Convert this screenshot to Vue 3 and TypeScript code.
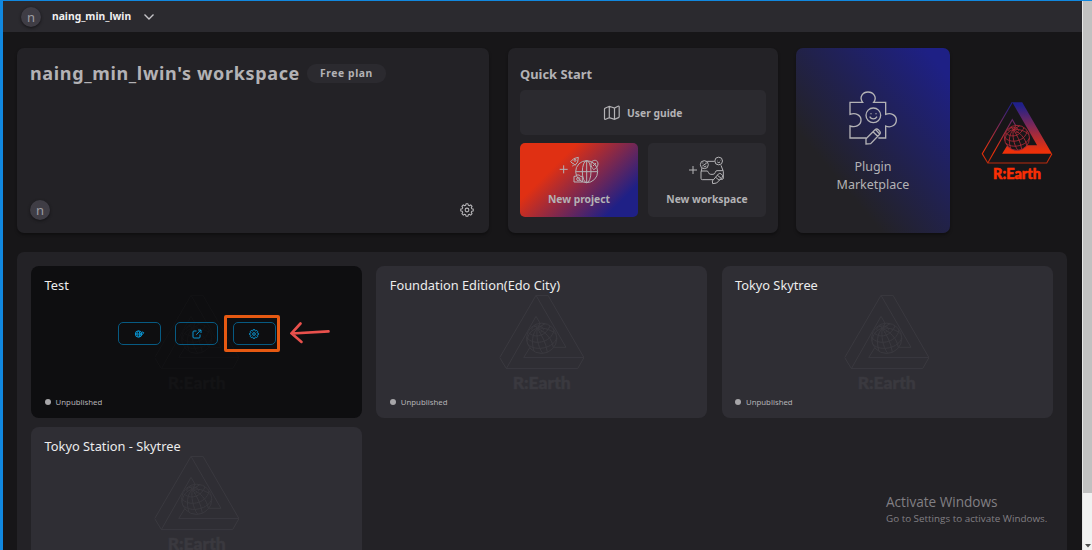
<script setup lang="ts">
interface Project {
  name: string
  status: string
  active?: boolean
}

const user = 'naing_min_lwin'
const projects: Project[] = [
  { name: 'Test', status: 'Unpublished', active: true },
  { name: 'Foundation Edition(Edo City)', status: 'Unpublished' },
  { name: 'Tokyo Skytree', status: 'Unpublished' },
  { name: 'Tokyo Station - Skytree', status: 'Unpublished' },
]

// Outline of an eight-toothed cog centred in a 24×24 box.
function cogPath(): string {
  const points: string[] = []
  for (let tooth = 0; tooth < 8; tooth++) {
    const corners: [number, number][] = [[-16, 8.4], [-9, 10.8], [9, 10.8], [16, 8.4]]
    for (const [offset, radius] of corners) {
      const angle = ((tooth * 45 + offset) * Math.PI) / 180
      points.push(`${(12 + radius * Math.cos(angle)).toFixed(2)} ${(12 + radius * Math.sin(angle)).toFixed(2)}`)
    }
  }
  return `M${points.join('L')}Z`
}
const cog = cogPath()
</script>

<template>
  <div class="window">
    <svg class="defs" width="0" height="0" aria-hidden="true">
      <defs>
        <linearGradient id="brand" gradientUnits="userSpaceOnUse" x1="0" y1="0" x2="0" y2="222">
          <stop offset="0.05" stop-color="#20208a" />
          <stop offset="0.38" stop-color="#7c2858" />
          <stop offset="0.75" stop-color="#df3013" />
          <stop offset="0.82" stop-color="#f03008" />
          <stop offset="1" stop-color="#b42a0e" />
        </linearGradient>
        <symbol id="globe" viewBox="0 0 96 96" overflow="visible">
          <circle cx="48" cy="48" r="45.5" />
          <ellipse cx="35" cy="18" rx="7" ry="4" />
          <ellipse cx="36" cy="21" rx="18" ry="10" />
          <path d="M7 27C18 48 58 47 73 11M3 45C20 71 78 63 85 23M7 66C28 90 88 76 93 46M35 18C16 22 5 38 4 58M35 18C19 33 17 62 25 86M35 18C31 40 36 72 51 93M35 18C47 36 61 62 65 89M35 18C58 28 79 48 83 76M35 18C58 14 82 26 91 36M35 18L44 3M35 18L26 8M35 18L58 4" />
        </symbol>
      </defs>
    </svg>

    <div class="page">
      <header class="header">
        <span class="avatar">n</span>
        <span class="user">{{ user }}</span>
        <svg class="chevron" viewBox="0 0 12 8"><path d="M1.500 1.500 6 6l4.500-4.500" /></svg>
      </header>

      <main class="content">
        <section class="top">
          <article class="card workspace">
            <div class="ws-head">
              <h1>{{ user }}'s workspace</h1>
              <span class="plan">Free plan</span>
            </div>
            <div class="ws-foot">
              <span class="avatar">n</span>
              <svg class="ws-gear" viewBox="0 0 24 24"><path :d="cog" /><circle cx="12" cy="12" r="3.200" /></svg>
            </div>
          </article>

          <article class="card quick">
            <h2>Quick Start</h2>
            <div class="tile guide">
              <svg class="map" viewBox="0 0 18 16">
                <path d="M2 3.200 6.300 1.300l5.200 1.700L15 1.300q1.200-.4 1.200.8v9.400q0 .8-.7 1.100l-4 1.800-5.200-1.700-3.600 1.600q-1.200.4-1.200-.8V4.200q0-.7.5-1zM6.300 1.300v11.400M11.500 3v11.400" />
              </svg>
              <span>User guide</span>
            </div>
            <div class="tiles">
              <div class="tile new-project">
                <svg class="art" viewBox="0 0 120 84">
                  <path d="M2 37h24M14 25v24" />
                  <circle cx="83" cy="44" r="33" />
                  <ellipse cx="83" cy="44" rx="13" ry="33" />
                  <path d="M83 11v66M50 44h66" />
                  <path d="M35 14l9-9 14-4-2 14-8 10-3-4-6-3zM43 24l-2 4" />
                  <circle cx="48" cy="10" r="3" />
                  <path d="M101 12c9-5 16 0 16 9 0 8-7 14-13 17-4-5-9-10-8-17 0-5 2-7 5-9zM102 17l9 9M102 27l9-9" />
                  <path d="M45 58h5l3-4h8l3 4h6v17H45z" />
                  <circle cx="58" cy="66" r="5" />
                </svg>
                <span>New project</span>
              </div>
              <div class="tile">
                <svg class="art" viewBox="0 0 120 84">
                  <path d="M6 39h24M18 27v24" />
                  <path d="M61 13h22M102 25l7 18v20q0 4-4 4h-8M45 33l-3 12v19q0 4 4 4h32M42 42h18q3 0 4 4 2 6 7 6h7q5 0 7-6 1-5 5-5h18" />
                  <circle cx="52" cy="23" r="12" />
                  <circle cx="95" cy="12" r="11.500" />
                  <path d="M46 18h3M56 18h3M46 27l12-8M50 30l8-3M91 10h1M99 10h1M91 15q5 4 8 0" />
                  <path d="M76 72l18-21q4-4 9 0 7 5 2 11L89 78l-12 2zM86 61l11 9M91 55l12 9" />
                </svg>
                <span>New workspace</span>
              </div>
            </div>
          </article>

          <article class="card market">
            <svg class="puzzle" viewBox="0 0 144 162">
              <path d="M88 141H110V105C126 112 142 102 142 87S126 64 110 70V34H74C86 18 72 3 57 3S29 18 41 34H3V70C20 64 36 72 36 87S20 111 3 105V141H52" />
              <circle cx="73" cy="73" r="22" />
              <path d="M66 67v3M81 67v3M62 77c5 9 17 9 22 0M51 143l27-27q5-4 10 0l5 6q3 4-1 8l-27 28-14 1zM72 122l14 14M79 115l13 14" />
            </svg>
            <p>Plugin<br />Marketplace</p>
          </article>

          <svg class="brand" viewBox="0 0 256 290">
            <g class="brand-lines">
              <path d="M110 1L1 188l20 33h214l19-33M21 221L110 64l17 29" />
              <path class="solid" d="M110 1h36l108 187H73l19-31h108z" />
              <use class="ball" href="#globe" x="79" y="82" width="96" height="96" />
            </g>
            <text x="40" y="281" textLength="174" lengthAdjust="spacingAndGlyphs">R:Earth</text>
          </svg>
        </section>

        <section class="panel">
          <article v-for="p in projects" :key="p.name" class="project" :class="{ active: p.active }">
            <h3>{{ p.name }}</h3>
            <svg class="mark" viewBox="0 0 256 290">
              <path d="M110 1h36l108 187-19 33H21L1 188zM21 221L110 64l17 29M110 1l90 156H91M254 188H73l19-31" />
              <use class="ball" href="#globe" x="79" y="82" width="96" height="96" />
              <text x="40" y="281" textLength="174" lengthAdjust="spacingAndGlyphs">R:Earth</text>
            </svg>
            <div v-if="p.active" class="actions">
              <button type="button">
                <svg viewBox="0 0 10 10"><circle cx="4.500" cy="5" r="3.200" /><path d="M1.300 5h6M4.500 1.800c-2 2-2 4.400 0 6.400M4.500 1.800c1.400 1.500 1.500 3 1 4.500M5 7.500l.4-1.500 3.500-3.200 1 1-3.600 3.500z" /></svg>
              </button>
              <button type="button">
                <svg viewBox="0 0 10 10"><path d="M4.500 2H2Q1 2 1 3v5q0 1 1 1h5q1 0 1-1V5.500M4.300 5.700l4.500-4.700M6 1h3v3" /></svg>
              </button>
              <button type="button">
                <svg class="small-gear" viewBox="0 0 24 24"><path :d="cog" /><circle cx="12" cy="12" r="3.200" /></svg>
              </button>
            </div>
            <div class="status"><i></i><span>{{ p.status }}</span></div>
          </article>
        </section>
      </main>
    </div>

    <div class="scrollbar"><div class="thumb"></div><svg class="down" viewBox="0 0 6 4"><path d="M0 0h6L3 3.500z" /></svg></div>

    <div class="highlight"></div>
    <svg class="arrow" viewBox="0 0 40 22">
      <path d="M38.500 9.400L2 11.500M10.500 1.500L1.500 11.300l10 8.600" />
    </svg>
    <div class="watermark">
      <div class="wm-title">Activate Windows</div>
      <div class="wm-sub">Go to Settings to activate Windows.</div>
    </div>
  </div>
</template>

<style>
body {
  margin: 0;
  background: #171618;
  overflow: hidden;
}
</style>

<style scoped>
* {
  box-sizing: border-box;
}
h1,
h2,
h3,
p {
  margin: 0;
}
.window {
  position: relative;
  display: flex;
  width: 1092px;
  height: 550px;
  overflow: hidden;
  border-left: 3px solid #1188e0;
  border-top: 1px solid #1188e0;
  background: #171618;
  color: #b3b2b5;
  font-family: 'Noto Sans', 'Open Sans', sans-serif;
}
.defs {
  position: absolute;
}
.page {
  flex: 1;
  min-width: 0;
}
.header {
  display: flex;
  align-items: center;
  height: 31px;
  padding-left: 18px;
  background: #2b2a2f;
}
.avatar {
  display: flex;
  align-items: center;
  justify-content: center;
  width: 20px;
  height: 20px;
  border-radius: 50%;
  background: #3f3d45;
  color: #9d9ca1;
  font-size: 13px;
  line-height: 20px;
  box-shadow: 0 1px 3px #141316;
}
.user {
  margin: -1px 0 0 11px;
  color: #f0f0f0;
  font-size: 10.300px;
  font-weight: 700;
}
.chevron {
  width: 12px;
  height: 8px;
  margin-left: 12px;
  fill: none;
  stroke: #c5c4c8;
  stroke-width: 1.400;
}
.content {
  padding: 16px 15px 0 14px;
}
.top {
  display: flex;
  height: 185px;
}
.card {
  border-radius: 7px;
  background: #232226;
  box-shadow: 0 2px 3px rgba(0, 0, 0, 0.350);
}
.workspace {
  display: flex;
  flex-direction: column;
  justify-content: space-between;
  width: 472.300px;
  padding: 12px 13px 13px;
}
.ws-head {
  display: flex;
  align-items: center;
  gap: 7px;
}
.ws-head h1 {
  font-size: 18px;
  line-height: 27px;
  letter-spacing: 0.650px;
  white-space: nowrap;
}
.plan {
  height: 19px;
  padding: 0 13px;
  border-radius: 9px;
  background: #2b2a2f;
  font-size: 10.300px;
  font-weight: 700;
  line-height: 18px;
  letter-spacing: 0.600px;
  white-space: nowrap;
}
.ws-foot {
  display: flex;
  align-items: center;
  justify-content: space-between;
}
.ws-gear {
  width: 14px;
  height: 14px;
  margin-right: 2px;
  fill: none;
  stroke: #b9b8bb;
  stroke-width: 1.800;
  stroke-linejoin: round;
}
.quick {
  width: 270px;
  margin-left: 18.700px;
  padding: 15px 12px 0;
}
.quick h2 {
  font-size: 12.900px;
  line-height: 22px;
}
.tile {
  display: flex;
  flex-direction: column;
  align-items: center;
  flex: 1;
  height: 74px;
  padding-top: 13.600px;
  border-radius: 5px;
  background: #2b2a2f;
  font-size: 10.300px;
  font-weight: 700;
  line-height: 16px;
}
.guide {
  flex-direction: row;
  justify-content: center;
  gap: 6.500px;
  height: 45px;
  margin-top: 5.300px;
  padding: 0 1px 0 0;
}
.map {
  width: 18px;
  height: 16px;
  fill: none;
  stroke: #b3b2b5;
  stroke-width: 1.200;
}
.tiles {
  display: flex;
  gap: 10px;
  margin-top: 8px;
}
.new-project {
  background: linear-gradient(135deg, #e03013 30%, #1f2086 83%);
}
.art {
  width: 40px;
  height: 28px;
  margin-bottom: 6px;
  overflow: visible;
  fill: none;
  stroke: #b5b4b7;
  stroke-width: 3;
}
.market {
  display: flex;
  flex-direction: column;
  align-items: center;
  width: 154px;
  margin-left: 18px;
  padding-top: 43px;
  background: linear-gradient(to top right, #232226 28%, #1e2085 92%);
}
.puzzle {
  width: 48px;
  height: 54px;
  margin-left: 1px;
  fill: none;
  stroke: #b3b2b5;
  stroke-width: 4;
}
.market p {
  margin-top: 13px;
  font-size: 12.500px;
  line-height: 18px;
  text-align: center;
}
.brand {
  width: 70.500px;
  height: 80px;
  margin: 53.500px 0 0 32px;
  overflow: visible;
}
.brand-lines {
  fill: none;
  stroke: url(#brand);
  stroke-width: 4;
}
.brand .solid {
  fill: url(#brand);
  stroke: none;
}
.brand .ball {
  fill: #171618;
  stroke: #b42c3a;
  stroke-width: 3;
}
.brand text {
  fill: #fa2f05;
  stroke: #fa2f05;
  stroke-width: 2;
}
.brand text,
.mark text {
  font-family: Lato, 'Noto Sans', sans-serif;
  font-size: 52px;
  font-weight: 900;
}
.panel {
  display: grid;
  grid-template-columns: repeat(3, 331px);
  grid-auto-rows: 151.500px;
  gap: 9.500px 14.200px;
  width: 1050px;
  height: 340px;
  margin-top: 19px;
  padding: 14px 14px 14px 14.300px;
  border-radius: 7px 7px 0 0;
  background: #232226;
}
.project {
  position: relative;
  display: flex;
  flex-direction: column;
  padding: 10px 13.300px;
  border-radius: 8px;
  background: #2f2e34;
}
.project h3 {
  color: #ececed;
  font-size: 12.800px;
  font-weight: 400;
  line-height: 18px;
}
.mark {
  position: absolute;
  left: 50%;
  top: 28.500px;
  width: 85.300px;
  height: 96.600px;
  transform: translateX(-50%);
  fill: none;
  stroke: #3a393f;
  stroke-width: 3;
}
.mark .ball {
  fill: #2f2e34;
}
.mark text {
  fill: #3a393f;
  stroke-width: 1.500;
}
.project.active {
  background: #0e0e10;
}
.active .mark {
  stroke: #131315;
}
.active .mark .ball {
  fill: #0e0e10;
}
.active .mark text {
  fill: #131315;
}
.actions {
  position: relative;
  display: flex;
  justify-content: center;
  gap: 14.500px;
  margin-top: 28px;
}
.actions button {
  display: flex;
  align-items: center;
  justify-content: center;
  width: 43px;
  height: 23px;
  padding: 0;
  border: 1px solid #075a82;
  border-radius: 5px;
  background: transparent;
}
.actions svg {
  width: 10px;
  height: 10px;
  overflow: visible;
  fill: none;
  stroke: #0995d3;
  stroke-width: 1;
}
.actions .small-gear {
  stroke-width: 2.300;
}
.status {
  display: flex;
  align-items: center;
  gap: 5px;
  margin-top: auto;
  font-size: 7.800px;
  line-height: 11px;
}
.status i {
  width: 6px;
  height: 6px;
  border-radius: 50%;
  background: #a7a6a9;
}
.scrollbar {
  position: relative;
  width: 10px;
  border-left: 1px solid #e6e6e6;
  background: #f1f1f1;
}
.thumb {
  height: 492px;
  background: #c1c1c1;
}
.down {
  position: absolute;
  left: 2px;
  bottom: 2px;
  width: 6px;
  height: 4px;
  fill: #505050;
}
.highlight {
  position: absolute;
  left: 221px;
  top: 314px;
  width: 56px;
  height: 37px;
  border: 3px solid #e65912;
  border-radius: 2px;
}
.arrow {
  position: absolute;
  left: 287px;
  top: 321px;
  width: 40px;
  height: 22px;
  fill: none;
  stroke: #e8504c;
  stroke-width: 2.600;
  stroke-linecap: round;
}
.watermark {
  position: absolute;
  left: 883px;
  top: 491px;
  color: #817f83;
  font-family: 'Open Sans', 'Noto Sans', sans-serif;
  white-space: nowrap;
}
.wm-title {
  font-size: 13.600px;
  line-height: 19px;
}
.wm-sub {
  font-size: 9.850px;
  line-height: 14px;
}
</style>
